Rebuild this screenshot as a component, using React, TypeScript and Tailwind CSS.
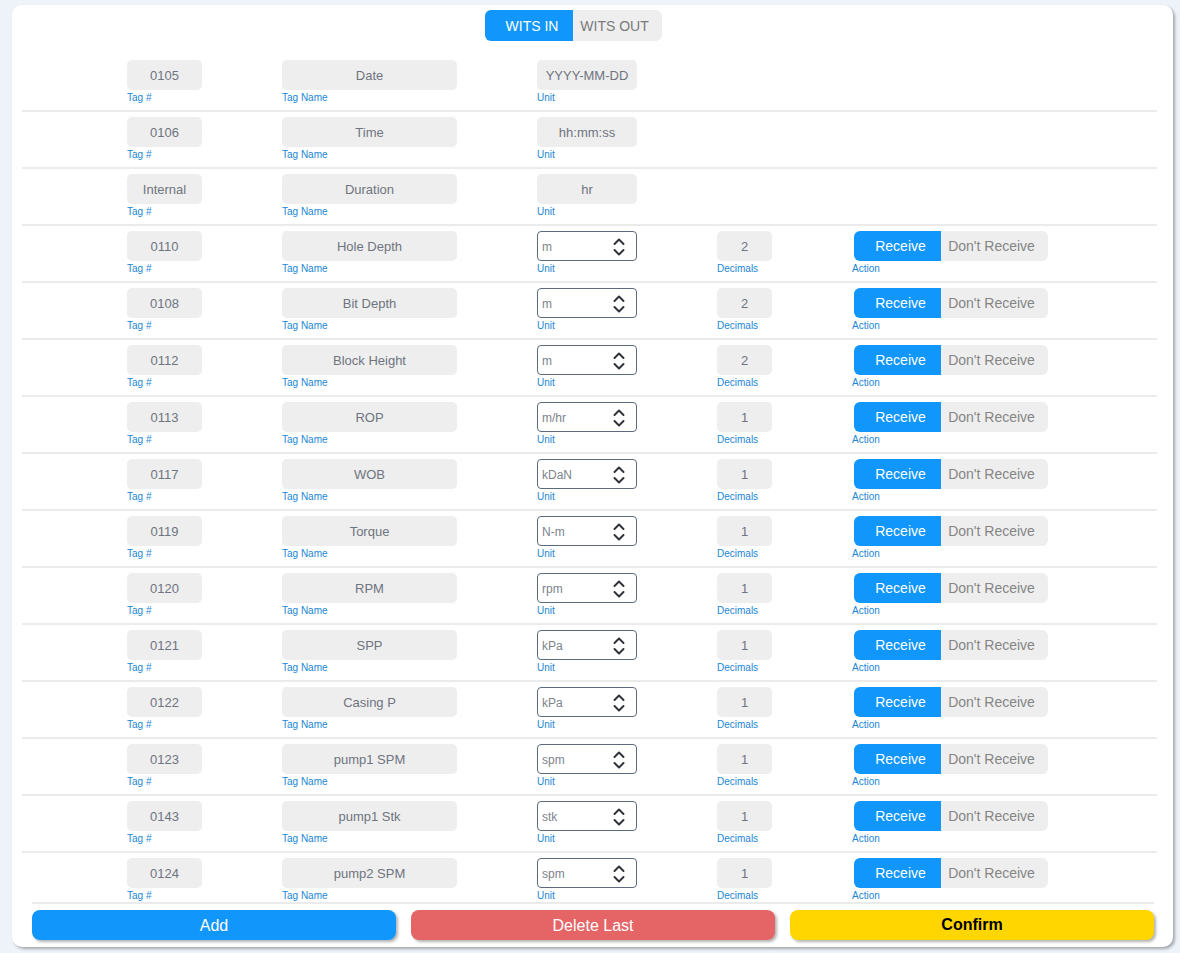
import React from "react";

type Row = { tag: string; name: string; unit: string; select?: boolean; dec?: string };

const rows: Row[] = [
  { tag: "0105", name: "Date", unit: "YYYY-MM-DD" },
  { tag: "0106", name: "Time", unit: "hh:mm:ss" },
  { tag: "Internal", name: "Duration", unit: "hr" },
  { tag: "0110", name: "Hole Depth", unit: "m", select: true, dec: "2" },
  { tag: "0108", name: "Bit Depth", unit: "m", select: true, dec: "2" },
  { tag: "0112", name: "Block Height", unit: "m", select: true, dec: "2" },
  { tag: "0113", name: "ROP", unit: "m/hr", select: true, dec: "1" },
  { tag: "0117", name: "WOB", unit: "kDaN", select: true, dec: "1" },
  { tag: "0119", name: "Torque", unit: "N-m", select: true, dec: "1" },
  { tag: "0120", name: "RPM", unit: "rpm", select: true, dec: "1" },
  { tag: "0121", name: "SPP", unit: "kPa", select: true, dec: "1" },
  { tag: "0122", name: "Casing P", unit: "kPa", select: true, dec: "1" },
  { tag: "0123", name: "pump1 SPM", unit: "spm", select: true, dec: "1" },
  { tag: "0143", name: "pump1 Stk", unit: "stk", select: true, dec: "1" },
  { tag: "0124", name: "pump2 SPM", unit: "spm", select: true, dec: "1" },
];

const font = { fontFamily: '"Liberation Sans", Arial, sans-serif' };

function Label({ children }: { children: React.ReactNode }) {
  return <div className="h-[13px] text-[10px] leading-[15px] text-[#1b86d6]">{children}</div>;
}

function Field({ w, children }: { w: string; children: React.ReactNode }) {
  return (
    <div className={`${w} h-[30px] rounded-[5px] bg-[#eeeeee] flex items-center justify-center pt-[1px] text-[13px] text-[#6e7480]`}>
      {children}
    </div>
  );
}

function Chevrons() {
  return (
    <svg width="14" height="22" viewBox="0 0 14 22" fill="none" stroke="#2f3338" strokeWidth="2" strokeLinecap="round" strokeLinejoin="round">
      <path d="M2.5 8 L7 3.5 L11.5 8" />
      <path d="M2.5 14 L7 18.5 L11.5 14" />
    </svg>
  );
}

function RowView({ r }: { r: Row }) {
  return (
    <div className="flex gap-[80px] pl-[105px] pt-[5px] pb-[7px] border-b-2 border-[#ebebeb]">
      <div>
        <Field w="w-[75px]">{r.tag}</Field>
        <Label>Tag #</Label>
      </div>
      <div>
        <Field w="w-[175px]">{r.name}</Field>
        <Label>Tag Name</Label>
      </div>
      <div>
        {r.select ? (
          <div className="w-[100px] h-[30px] rounded-[4px] border border-[#5c6b7b] flex items-center justify-between pl-[4px] pr-[10px] pt-[1px] text-[12px] text-[#7d838d]">
            <span>{r.unit}</span>
            <Chevrons />
          </div>
        ) : (
          <Field w="w-[100px]">{r.unit}</Field>
        )}
        <Label>Unit</Label>
      </div>
      {r.dec && (
        <div>
          <Field w="w-[55px]">{r.dec}</Field>
          <Label>Decimals</Label>
        </div>
      )}
      {r.dec && (
        <div>
          <div className="ml-[2px] flex h-[30px] rounded-[6px] overflow-hidden text-[14px]">
            <div className="w-[87px] bg-[#1196fb] text-white flex items-center justify-center pl-[6px] pt-[1px]">Receive</div>
            <div className="w-[107px] bg-[#eeeeee] text-[#858585] flex items-center justify-center pr-[6px] pt-[1px]">Don't Receive</div>
          </div>
          <Label>Action</Label>
        </div>
      )}
    </div>
  );
}

export default function App() {
  return (
    <div className="w-[1180px] h-[953px] bg-[#eef2f9] pt-[5px] pl-[12px]" style={font}>
      <div className="w-[1161px] h-[942px] bg-white rounded-[10px] shadow-[2px_2px_3px_rgba(0,0,0,0.3)] flex flex-col">
        <div className="flex justify-center pt-[5px] pr-[38px]">
          <div className="flex h-[31px] rounded-[6px] overflow-hidden text-[14px]">
            <div className="w-[88px] bg-[#1196fb] text-white flex items-center justify-center pl-[6px] pt-[1px]">WITS IN</div>
            <div className="w-[89px] bg-[#eeeeee] text-[#7a7a7a] flex items-center justify-center pr-[6px] pt-[1px]">WITS OUT</div>
          </div>
        </div>
        <div className="mt-[14px] ml-[10px] mr-[16px] h-[847px] overflow-hidden">
          {rows.map((r, i) => (
            <RowView key={i} r={r} />
          ))}
        </div>
        <div className="mx-[19px] ml-[20px] border-t-2 border-[#ebebeb] pt-[6px] flex gap-[15px]">
          <button className="flex-1 h-[30px] rounded-[8px] bg-[#1196fb] text-white text-[16px] pt-[1px] shadow-[2px_2px_3px_rgba(0,0,0,0.3)]">Add</button>
          <button className="flex-1 h-[30px] rounded-[8px] bg-[#e56466] text-white text-[16px] pt-[1px] shadow-[2px_2px_3px_rgba(0,0,0,0.3)]">Delete Last</button>
          <button className="flex-1 h-[30px] rounded-[8px] bg-[#ffd600] text-black font-bold text-[16px] shadow-[2px_2px_3px_rgba(0,0,0,0.3)]">Confirm</button>
        </div>
      </div>
    </div>
  );
}
